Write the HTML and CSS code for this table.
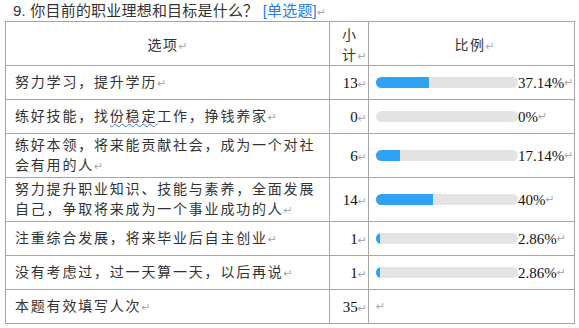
FILE: index.html
```html
<!DOCTYPE html>
<html lang="zh-CN">
<head>
<meta charset="utf-8">
<title>职业理想</title>
<link rel="stylesheet" href="styles.css">
</head>
<body>
<div class="page">
  <div class="title">9. 你目前的职业理想和目标是什么？ <span class="tag">[单选题]</span><span class="ret">↵</span></div>
  <table class="grid">
    <colgroup>
      <col class="c1"><col class="c2"><col class="c3">
    </colgroup>
    <thead>
      <tr class="head">
        <th class="h-opt">选项<span class="ret">↵</span></th>
        <th class="h-num">小<br>计<span class="ret">↵</span></th>
        <th class="h-pct">比例<span class="ret">↵</span></th>
      </tr>
    </thead>
    <tbody>
      <tr class="row">
        <td class="opt">努力学习，提升学历<span class="ret">↵</span></td>
        <td class="num">13<span class="ret">↵</span></td>
        <td class="pct"><div class="cell"><div class="bar"><div class="fill" style="width:37.14%"></div></div><span class="val">37.14%</span><span class="ret">↵</span></div></td>
      </tr>
      <tr class="row">
        <td class="opt">练好技能，找<span class="wavy">份稳定</span>工作，挣钱养家<span class="ret">↵</span></td>
        <td class="num">0<span class="ret">↵</span></td>
        <td class="pct"><div class="cell"><div class="bar"><div class="fill" style="width:0%"></div></div><span class="val">0%</span><span class="ret">↵</span></div></td>
      </tr>
      <tr class="row">
        <td class="opt">练好本领，将来能贡献社会，成为一个对社会有用的人<span class="ret">↵</span></td>
        <td class="num">6<span class="ret">↵</span></td>
        <td class="pct"><div class="cell"><div class="bar"><div class="fill" style="width:17.14%"></div></div><span class="val">17.14%</span><span class="ret">↵</span></div></td>
      </tr>
      <tr class="row">
        <td class="opt">努力提升职业知识、技能与素养，全面发展自己，争取将来成为一个事业成功的人<span class="ret">↵</span></td>
        <td class="num">14<span class="ret">↵</span></td>
        <td class="pct"><div class="cell"><div class="bar"><div class="fill" style="width:40%"></div></div><span class="val">40%</span><span class="ret">↵</span></div></td>
      </tr>
      <tr class="row">
        <td class="opt">注重综合发展，将来毕业后自主创业<span class="ret">↵</span></td>
        <td class="num">1<span class="ret">↵</span></td>
        <td class="pct"><div class="cell"><div class="bar"><div class="fill" style="width:2.86%"></div></div><span class="val">2.86%</span><span class="ret">↵</span></div></td>
      </tr>
      <tr class="row">
        <td class="opt">没有考虑过，过一天算一天，以后再说<span class="ret">↵</span></td>
        <td class="num">1<span class="ret">↵</span></td>
        <td class="pct"><div class="cell"><div class="bar"><div class="fill" style="width:2.86%"></div></div><span class="val">2.86%</span><span class="ret">↵</span></div></td>
      </tr>
      <tr class="row">
        <td class="opt">本题有效填写人次<span class="ret">↵</span></td>
        <td class="num">35<span class="ret">↵</span></td>
        <td class="pct"><div class="cell"><span class="ret">↵</span></div></td>
      </tr>
    </tbody>
  </table>
</div>
</body>
</html>
```

FILE: styles.css
```css
html, body {
  margin: 0;
  padding: 0;
  background: #ffffff;
}

.page {
  padding: 1px 0 0 5px;
}

.title {
  font-family: "Liberation Sans", "Noto Sans CJK SC", sans-serif;
  font-size: 15px;
  line-height: 20px;
  height: 20px;
  color: #333333;
  padding-left: 8px;
  letter-spacing: 0.2px;
  white-space: nowrap;
}

.tag {
  color: #2a7cf0;
}

.ret {
  font-family: "DejaVu Sans", sans-serif;
  font-size: 11px;
  line-height: 1;
  color: #aaaaaa;
  letter-spacing: 0;
}

.grid {
  border-collapse: collapse;
  table-layout: fixed;
  width: 569px;
}

.c1 { width: 324px; }
.c2 { width: 39px; }
.c3 { width: 206px; }

.head { height: 44px; }
.row { height: 34px; }

.grid th,
.grid td {
  border: 1px solid #a6a6a6;
  padding: 0;
  vertical-align: middle;
  color: #333333;
  line-height: 20px;
}

.grid th {
  font-family: "Noto Sans CJK SC", sans-serif;
  font-weight: normal;
  font-size: 14px;
  letter-spacing: 1.5px;
}

.grid .h-opt { text-align: center; }
.grid .h-pct { text-align: center; padding-left: 6px; }
.grid .h-num {
  text-align: left;
  padding-left: 12px;
  white-space: nowrap;
}

.grid .opt {
  font-family: "Noto Sans CJK SC", sans-serif;
  font-size: 14px;
  letter-spacing: 1.8px;
  padding: 0 9px 3px 9px;
}

.wavy {
  text-decoration: underline wavy #3b6fe0;
  text-decoration-thickness: 1px;
  text-underline-offset: 2px;
}

.grid .num {
  font-family: "Liberation Serif", serif;
  font-size: 15px;
  color: #111111;
  text-align: right;
  padding-right: 1px;
  white-space: nowrap;
}

.grid .pct {
  padding-left: 7px;
}

.cell {
  display: flex;
  align-items: center;
  white-space: nowrap;
}

.bar {
  width: 142px;
  height: 11px;
  border-radius: 6px;
  background: #e4e4e6;
  overflow: hidden;
  flex: none;
}

.fill {
  height: 100%;
  background: #2ea2f5;
}

.val {
  font-family: "Liberation Serif", serif;
  font-size: 15px;
  color: #111111;
}
```
